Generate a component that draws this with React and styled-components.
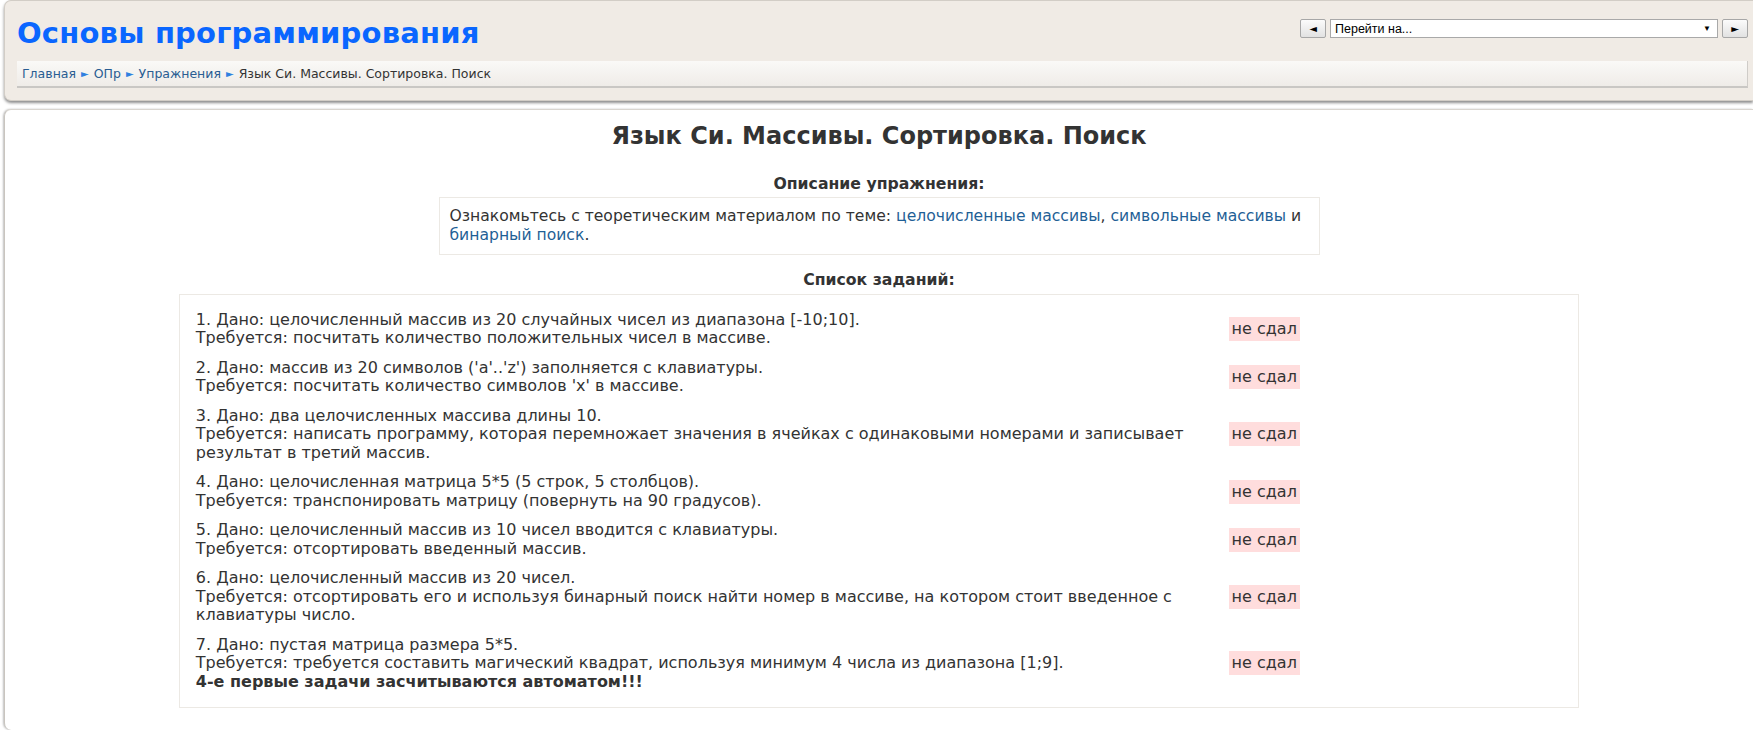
import React from 'react';
import styled, { createGlobalStyle } from 'styled-components';

const GlobalStyle = createGlobalStyle`
  html, body {
    margin: 0;
    padding: 0;
    background: #ffffff;
  }
  body {
    font-family: 'DejaVu Sans', Verdana, sans-serif;
    color: #333;
  }
`;

const Page = styled.div`
  padding-left: 4px;
  width: 1749px;
`;

const Header = styled.div`
  background: #f0ebe5;
  border: 1px solid #d2cdc6;
  border-right: 0;
  border-radius: 7px 0 0 7px;
  box-shadow: 0 2px 3px rgba(0, 0, 0, 0.45);
  padding: 0 5px 10px 8px;
  height: 89px;
`;

const TopRow = styled.div`
  display: flex;
  justify-content: space-between;
  align-items: flex-start;
  height: 60px;
`;

const SiteTitle = styled.h1`
  margin: 15px 0 0 4px;
  font-size: 29px;
  font-weight: bold;
  color: #0a66ff;
  letter-spacing: 0.2px;
`;

const JumpNav = styled.div`
  display: flex;
  gap: 4px;
  margin-top: 18px;
`;

const NavButton = styled.div`
  width: 26px;
  height: 19px;
  box-sizing: border-box;
  border: 1px solid #a7a7a7;
  border-radius: 2px;
  background: linear-gradient(#fbfbfb, #e2e2e2);
  display: flex;
  align-items: center;
  justify-content: center;
  font-size: 10px;
  color: #000;
  font-family: 'DejaVu Sans', sans-serif;
`;

const Select = styled.div`
  width: 388px;
  height: 19px;
  box-sizing: border-box;
  border: 1px solid #a9a9a9;
  background: #fff;
  display: flex;
  align-items: center;
  justify-content: space-between;
  padding: 0 6px 0 4px;
  font-family: 'Liberation Sans', Arial, sans-serif;
  font-size: 12.5px;
  color: #000;
`;

const SelectArrow = styled.span`
  font-size: 8px;
`;

const Crumbs = styled.div`
  margin-left: 4px;
  height: 27px;
  box-sizing: border-box;
  background: linear-gradient(#faf9f7, #efece8);
  border-bottom: 2px solid #c9c7c4;
  border-right: 1px solid #cfccc8;
  display: flex;
  align-items: center;
  padding-left: 5px;
  font-size: 12.5px;
`;

const CrumbLink = styled.a`
  color: #2a5d92;
  text-decoration: none;
`;

const CrumbSep = styled.span`
  color: #2f7fe0;
  font-size: 10px;
  margin: 0 5px;
`;

const CrumbCurrent = styled.span`
  color: #333;
`;

const Content = styled.div`
  margin-top: 8px;
  background: #fff;
  border-left: 1px solid #c9c5bf;
  border-top: 1px solid #d9d5cf;
  border-radius: 7px 0 0 7px;
  box-shadow: -1px 0 2px rgba(0, 0, 0, 0.25);
  padding: 12px 0 22px;
  text-align: center;
`;

const PageHeading = styled.h2`
  margin: 0 0 24px;
  font-size: 24px;
  font-weight: bold;
  color: #333;
`;

const SectionTitle = styled.h3`
  margin: 0 0 4px;
  font-size: 15.7px;
  font-weight: bold;
  color: #333;
`;

const DescBox = styled.div`
  width: 864px;
  margin: 0 auto 15px;
  border: 1px solid #ece9e4;
  padding: 9px 5px 9px 10px;
  text-align: left;
  font-size: 15.6px;
  line-height: 19px;
`;

const TextLink = styled.a`
  color: #1f5f96;
  text-decoration: none;
`;

const TaskTable = styled.div`
  width: 80%;
  margin: 5px auto 0;
  border: 1px solid #ece9e4;
  padding: 10px 0;
  display: grid;
  grid-template-columns: 75% 25%;
  text-align: left;
  font-size: 16px;
  line-height: 18.5px;
`;

const TaskCell = styled.div`
  padding: 5.5px 16px;
`;

const StatusCell = styled.div`
  display: flex;
  align-items: center;
  padding: 5.5px 0;
`;

const Badge = styled.span`
  background: #ffdddd;
  padding: 3px 3px;
  line-height: 18px;
`;

const Strong = styled.b`
  font-weight: bold;
`;

const tasks = [
  ['1. Дано: целочисленный массив из 20 случайных чисел из диапазона [-10;10].', 'Требуется: посчитать количество положительных чисел в массиве.'],
  ["2. Дано: массив из 20 символов ('a'..'z') заполняется с клавиатуры.", "Требуется: посчитать количество символов 'x' в массиве."],
  ['3. Дано: два целочисленных массива длины 10.', 'Требуется: написать программу, которая перемножает значения в ячейках с одинаковыми номерами и записывает результат в третий массив.'],
  ['4. Дано: целочисленная матрица 5*5 (5 строк, 5 столбцов).', 'Требуется: транспонировать матрицу (повернуть на 90 градусов).'],
  ['5. Дано: целочисленный массив из 10 чисел вводится с клавиатуры.', 'Требуется: отсортировать введенный массив.'],
  ['6. Дано: целочисленный массив из 20 чисел.', 'Требуется: отсортировать его и используя бинарный поиск найти номер в массиве, на котором стоит введенное с клавиатуры число.'],
  ['7. Дано: пустая матрица размера 5*5.', 'Требуется: требуется составить магический квадрат, используя минимум 4 числа из диапазона [1;9].'],
];

const App = () => {
  return (
    <Page>
      <GlobalStyle />
      <Header>
        <TopRow>
          <SiteTitle>Основы программирования</SiteTitle>
          <JumpNav>
            <NavButton>◄</NavButton>
            <Select>
              <span>Перейти на...</span>
              <SelectArrow>▼</SelectArrow>
            </Select>
            <NavButton>►</NavButton>
          </JumpNav>
        </TopRow>
        <Crumbs>
          <CrumbLink href="#">Главная</CrumbLink>
          <CrumbSep>►</CrumbSep>
          <CrumbLink href="#">ОПр</CrumbLink>
          <CrumbSep>►</CrumbSep>
          <CrumbLink href="#">Упражнения</CrumbLink>
          <CrumbSep>►</CrumbSep>
          <CrumbCurrent>Язык Си. Массивы. Сортировка. Поиск</CrumbCurrent>
        </Crumbs>
      </Header>
      <Content>
        <PageHeading>Язык Си. Массивы. Сортировка. Поиск</PageHeading>
        <SectionTitle>Описание упражнения:</SectionTitle>
        <DescBox>
          Ознакомьтесь с теоретическим материалом по теме:{' '}
          <TextLink href="#">целочисленные массивы</TextLink>,{' '}
          <TextLink href="#">символьные массивы</TextLink> и{' '}
          <TextLink href="#">бинарный поиск</TextLink>.
        </DescBox>
        <SectionTitle>Список заданий:</SectionTitle>
        <TaskTable>
          {tasks.map(([given, need], i) => (
            <React.Fragment key={i}>
              <TaskCell>
                {given}
                <br />
                {need}
                {i === tasks.length - 1 && (
                  <>
                    <br />
                    <Strong>4-е первые задачи засчитываются автоматом!!!</Strong>
                  </>
                )}
              </TaskCell>
              <StatusCell>
                <Badge>не сдал</Badge>
              </StatusCell>
            </React.Fragment>
          ))}
        </TaskTable>
      </Content>
    </Page>
  );
};

export default App;
